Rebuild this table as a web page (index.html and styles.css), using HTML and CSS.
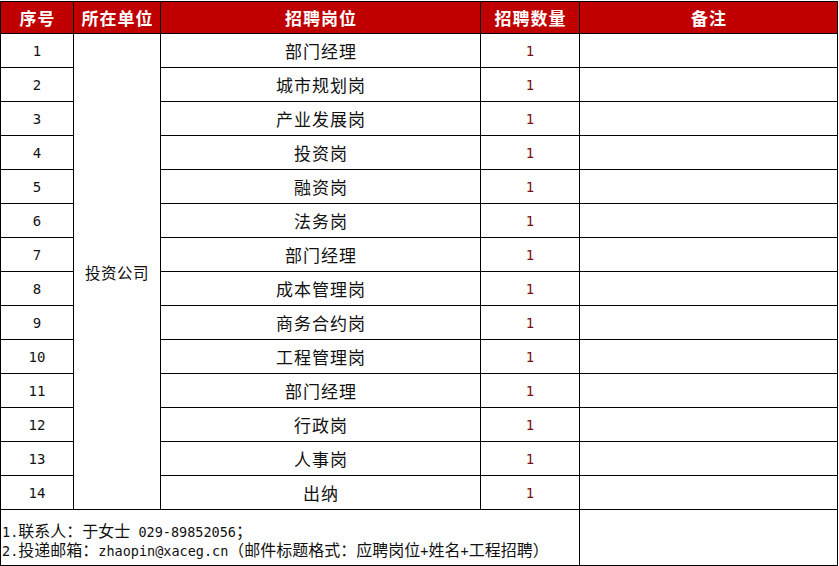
FILE: index.html
```html
<!DOCTYPE html>
<html lang="zh-CN">
<head>
<meta charset="utf-8">
<title>招聘岗位</title>
<link rel="stylesheet" href="styles.css">
</head>
<body>
<div class="wrap">
<table class="sheet">
  <colgroup>
    <col class="c-no">
    <col class="c-unit">
    <col class="c-post">
    <col class="c-count">
    <col class="c-note">
  </colgroup>
  <thead>
    <tr class="head">
      <th>序号</th>
      <th>所在单位</th>
      <th>招聘岗位</th>
      <th class="count-h">招聘数量</th>
      <th class="note">备注</th>
    </tr>
  </thead>
  <tbody>
    <tr><td class="num">1</td><td class="unit" rowspan="14">投资公司</td><td class="post">部门经理</td><td class="cnt">1</td><td class="note"></td></tr>
    <tr><td class="num">2</td><td class="post">城市规划岗</td><td class="cnt">1</td><td class="note"></td></tr>
    <tr><td class="num">3</td><td class="post">产业发展岗</td><td class="cnt">1</td><td class="note"></td></tr>
    <tr><td class="num">4</td><td class="post">投资岗</td><td class="cnt">1</td><td class="note"></td></tr>
    <tr><td class="num">5</td><td class="post">融资岗</td><td class="cnt">1</td><td class="note"></td></tr>
    <tr><td class="num">6</td><td class="post">法务岗</td><td class="cnt">1</td><td class="note"></td></tr>
    <tr><td class="num">7</td><td class="post">部门经理</td><td class="cnt">1</td><td class="note"></td></tr>
    <tr><td class="num">8</td><td class="post">成本管理岗</td><td class="cnt">1</td><td class="note"></td></tr>
    <tr><td class="num">9</td><td class="post">商务合约岗</td><td class="cnt">1</td><td class="note"></td></tr>
    <tr><td class="num">10</td><td class="post">工程管理岗</td><td class="cnt">1</td><td class="note"></td></tr>
    <tr><td class="num">11</td><td class="post">部门经理</td><td class="cnt">1</td><td class="note"></td></tr>
    <tr><td class="num">12</td><td class="post">行政岗</td><td class="cnt">1</td><td class="note"></td></tr>
    <tr><td class="num">13</td><td class="post">人事岗</td><td class="cnt">1</td><td class="note"></td></tr>
    <tr><td class="num">14</td><td class="post">出纳</td><td class="cnt">1</td><td class="note"></td></tr>
    <tr class="foot">
      <td colspan="4" class="info"><div class="line"><span class="lat">1.</span>联系人：于女士<span class="lat"> 029-89852056</span>；</div><div class="line"><span class="lat">2.</span>投递邮箱：<span class="lat">zhaopin@xaceg.cn</span>（邮件标题格式：应聘岗位<span class="lat">+</span>姓名<span class="lat">+</span>工程招聘）</div></td>
      <td class="note"></td>
    </tr>
  </tbody>
</table>
</div>
</body>
</html>
```
FILE: styles.css
```css
html, body {
  margin: 0;
  padding: 0;
  background: #ffffff;
}

.wrap {
  padding-top: 1px;
}

.sheet {
  border-collapse: collapse;
  table-layout: fixed;
  width: 837px;
  font-family: "Noto Sans CJK SC", "Noto Sans", sans-serif;
  color: #111;
}

.c-no { width: 73px; }
.c-unit { width: 87px; }
.c-post { width: 320px; }
.c-count { width: 99px; }
.c-note { width: 258px; }

.sheet th,
.sheet td {
  border: 1px solid #000;
  padding: 0;
  text-align: center;
  vertical-align: middle;
}

.head th {
  background: #c00000;
  color: #fff;
  font-size: 17px;
  letter-spacing: 1px;
  text-indent: 1px;
  font-weight: bold;
  height: 31px;
  line-height: 20px;
}

.sheet th.note,
.sheet td.note {
  border-left: 1px dashed #8a8a8a;
}

.sheet tbody td {
  height: 33px;
  font-size: 15px;
  line-height: 20px;
}

.sheet tbody td.post {
  font-size: 17px;
  letter-spacing: 1px;
  text-indent: 1px;
}

.sheet tbody td.unit {
  font-size: 15.5px;
  letter-spacing: 0.5px;
}

.sheet tbody td.num {
  font-family: "DejaVu Sans Mono", monospace;
  font-size: 14px;
}

.sheet tbody td.cnt {
  font-family: "DejaVu Sans Mono", monospace;
  font-size: 14px;
  color: #7a1010;
}

.sheet tbody tr.foot td {
  height: 49px;
  line-height: 19px;
}

.sheet td.info {
  text-align: left;
  vertical-align: bottom;
  font-size: 16px;
  padding: 0 0 6px 1px;
  white-space: nowrap;
}

.line {
  height: 19px;
  line-height: 19px;
  overflow: visible;
}

.lat {
  font-family: "DejaVu Sans Mono", monospace;
  font-size: 13.5px;
  line-height: 1;
}
```
